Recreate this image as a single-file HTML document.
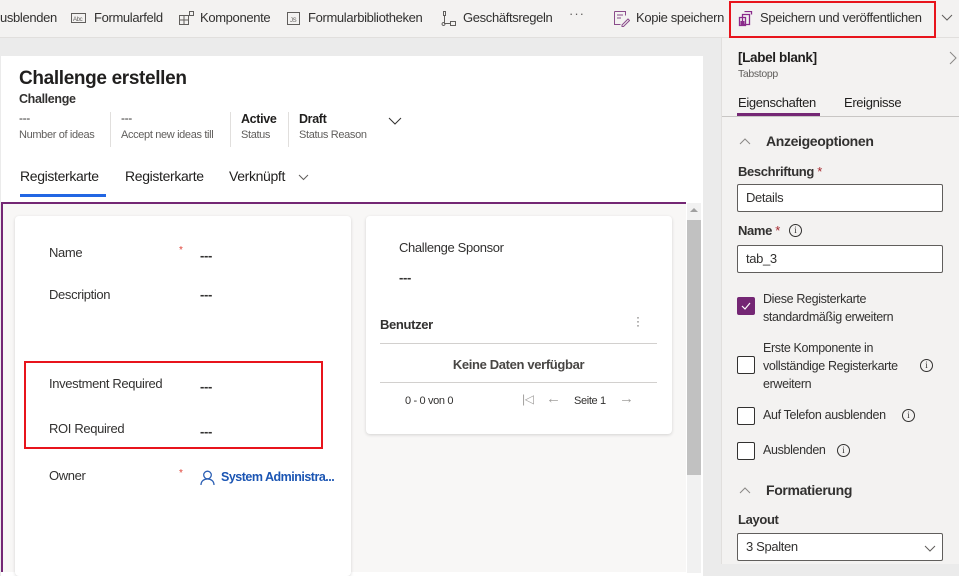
<!DOCTYPE html>
<html><head><meta charset="utf-8"><style>
*{box-sizing:border-box;margin:0;padding:0}
body{width:959px;height:564px;overflow:hidden;background:#ebebeb;font-family:"Segoe UI","Liberation Sans",sans-serif;color:#323130;position:relative;font-size:13px;letter-spacing:-0.35px}
.a{position:absolute;white-space:nowrap}
.tb{position:absolute;left:0;top:0;width:959px;height:38px;background:#f3f2f1;border-bottom:1px solid #e1dfdd}
.tb span{position:absolute;top:10px;font-size:13px;color:#323130}
.ic{position:absolute;top:11px}
.red{position:absolute;border:2px solid #e8141c}
.chk{position:absolute;width:18px;height:18px;border:1px solid #323130;border-radius:2px;background:#fff}
.info{position:absolute;width:13px;height:13px;border:1px solid #323130;border-radius:50%;font-size:9px;text-align:center;line-height:11px;font-family:"Liberation Serif",serif;letter-spacing:0}
.inp{position:absolute;left:737px;width:206px;height:28px;border:1px solid #605e5c;background:#fff;border-radius:2px;padding:0 8px;line-height:26px;font-size:13px}
</style></head><body>
<div class="tb">
<span style="left:0">usblenden</span>
<svg class="ic" style="left:71px" width="16" height="14"><rect x="0.5" y="2.5" width="14" height="9" fill="none" stroke="#605e5c"/><text x="2" y="10" font-size="6" fill="#605e5c">Abc</text></svg>
<span style="left:94px">Formularfeld</span>
<svg class="ic" style="left:179px" width="16" height="16"><path d="M0.5 4.5h9v9h-9zM0.5 9h9M5 4.5v9M10.5 0.5h4v4h-4z" fill="none" stroke="#605e5c"/></svg>
<span style="left:200px">Komponente</span>
<svg class="ic" style="left:287px" width="14" height="15"><rect x="0.5" y="1.5" width="12" height="12" fill="none" stroke="#605e5c"/><text x="3" y="11" font-size="6" fill="#605e5c">JS</text></svg>
<span style="left:308px">Formularbibliotheken</span>
<svg class="ic" style="left:441px" width="16" height="16"><path d="M2.5 0.5v4h2v-4zM3.5 4.5v8h6M9.5 10.5h5v4h-5z M2.5 11.5a1.5 1.5 0 1 0 .01 0" fill="none" stroke="#605e5c"/></svg>
<span style="left:463px">Geschäftsregeln</span>
<span style="left:569px;top:6px;letter-spacing:1px;color:#605e5c">···</span>
<svg class="ic" style="left:614px" width="16" height="16"><path d="M0.5 0.5h11v4M0.5 0.5v13h6M3 4h6M3 7h4M8 14l6-6 1.5 1.5-6 6H8z" fill="none" stroke="#8a4c8b"/></svg>
<span style="left:636px">Kopie speichern</span>
<svg class="ic" style="left:738px" width="16" height="16"><path d="M4.5 3.5h7v10h-7zM1.5 6.5h6v8h-6zM6.5 0.5h7v3" fill="none" stroke="#8a2a8b" stroke-width="1.3"/><rect x="2.5" y="10" width="4" height="4" fill="#8a2a8b"/></svg>
<span style="left:760px">Speichern und veröffentlichen</span>
<svg class="ic" style="left:941px;top:14px" width="12" height="8"><path d="M1 1l5 5 5-5" fill="none" stroke="#605e5c"/></svg>
</div>
<div class="red" style="left:729px;top:1px;width:207px;height:37px"></div>

<div class="a" style="left:1px;top:56px;width:702px;height:520px;background:#fff"></div>
<div class="a" style="left:19px;top:68px;font-size:19px;font-weight:600;color:#201f1e">Challenge erstellen</div>
<div class="a" style="left:19px;top:92px;font-size:12.5px;font-weight:600;color:#323130">Challenge</div>
<div class="a" style="left:19px;top:111px;font-size:12px">---</div>
<div class="a" style="left:19px;top:129px;font-size:11px;color:#605e5c">Number of ideas</div>
<div class="a" style="left:110px;top:112px;width:1px;height:35px;background:#e1dfdd"></div>
<div class="a" style="left:121px;top:111px;font-size:12px">---</div>
<div class="a" style="left:121px;top:129px;font-size:11px;color:#605e5c">Accept new ideas till</div>
<div class="a" style="top:112px;width:1px;height:35px;background:#e1dfdd;left:230px"></div>
<div class="a" style="left:241px;top:112px;font-size:12.5px;font-weight:600;color:#201f1e">Active</div>
<div class="a" style="left:241px;top:129px;font-size:11px;color:#605e5c">Status</div>
<div class="a" style="left:288px;top:112px;width:1px;height:35px;background:#e1dfdd"></div>
<div class="a" style="left:299px;top:112px;font-size:12.5px;font-weight:600;color:#201f1e">Draft</div>
<div class="a" style="left:299px;top:129px;font-size:11px;color:#605e5c">Status Reason</div>
<svg class="a" style="left:388px;top:117px" width="14" height="8"><path d="M1 1l6 6 6-6" fill="none" stroke="#323130"/></svg>
<div class="a" style="left:20px;top:168px;font-size:14px;color:#201f1e">Registerkarte</div>
<div class="a" style="left:20px;top:194px;width:86px;height:3px;background:#2266e3"></div>
<div class="a" style="left:125px;top:168px;font-size:14px;color:#201f1e">Registerkarte</div>
<div class="a" style="left:229px;top:168px;font-size:14px;color:#201f1e">Verknüpft</div>
<svg class="a" style="left:298px;top:174px" width="11" height="7"><path d="M1 1l4.5 4.5L10 1" fill="none" stroke="#605e5c"/></svg>

<div class="a" style="left:1px;top:202px;width:685px;height:370px;background:#f8f7f6;border-top:2px solid #742774;border-left:2px solid #742774"></div>
<div class="a" style="left:687px;top:203px;width:14px;height:370px;background:#f1f1f1"></div>
<div class="a" style="left:690px;top:208px;width:0;height:0;border:4px solid transparent;border-bottom:4px solid #a0a0a0;border-top:0"></div>
<div class="a" style="left:687px;top:220px;width:14px;height:255px;background:#c1c1c1"></div>

<div class="a" style="left:15px;top:216px;width:336px;height:360px;background:#fff;border-radius:4px;box-shadow:0 1px 3px rgba(0,0,0,.15)"></div>
<div class="a" style="left:49px;top:245px">Name</div>
<div class="a" style="left:179px;top:245px;color:#e0453a;font-size:10px">*</div>
<div class="a" style="left:200px;top:248px;font-weight:600">---</div>
<div class="a" style="left:49px;top:287px">Description</div>
<div class="a" style="left:200px;top:287px;font-weight:600">---</div>
<div class="a" style="left:49px;top:376px">Investment Required</div>
<div class="a" style="left:200px;top:379px;font-weight:600">---</div>
<div class="a" style="left:49px;top:421px">ROI Required</div>
<div class="a" style="left:200px;top:424px;font-weight:600">---</div>
<div class="red" style="left:24px;top:361px;width:299px;height:88px"></div>
<div class="a" style="left:49px;top:468px">Owner</div>
<div class="a" style="left:179px;top:468px;color:#e0453a;font-size:10px">*</div>
<svg class="a" style="left:200px;top:470px" width="15" height="15"><circle cx="7.5" cy="5" r="3.8" fill="none" stroke="#2b5fb4" stroke-width="1.3"/><path d="M1 15c0-4 3-6 6.5-6s6.5 2 6.5 6" fill="none" stroke="#2b5fb4" stroke-width="1.3"/></svg>
<div class="a" style="left:221px;top:470px;color:#1b55b3;font-weight:600;font-size:12.5px;letter-spacing:-0.5px">System Administra...</div>

<div class="a" style="left:366px;top:216px;width:306px;height:218px;background:#fff;border-radius:4px;box-shadow:0 1px 3px rgba(0,0,0,.15)"></div>
<div class="a" style="left:399px;top:240px">Challenge Sponsor</div>
<div class="a" style="left:399px;top:270px;font-weight:600">---</div>
<div class="a" style="left:380px;top:317px;font-weight:600">Benutzer</div>
<div class="a" style="left:636px;top:315px;font-size:12px;line-height:4px;color:#605e5c">·<br>·<br>·</div>
<div class="a" style="left:380px;top:343px;width:277px;height:1px;background:#d2d0ce"></div>
<div class="a" style="left:380px;top:357px;width:277px;text-align:center;font-weight:600;color:#484644">Keine Daten verfügbar</div>
<div class="a" style="left:380px;top:382px;width:277px;height:1px;background:#d2d0ce"></div>
<div class="a" style="left:405px;top:395px;font-size:11px">0 - 0 von 0</div>
<div class="a" style="left:522px;top:392px;color:#a19f9d;font-size:12px">|◁</div>
<div class="a" style="left:546px;top:390px;color:#a19f9d;font-size:15px">←</div>
<div class="a" style="left:574px;top:395px;font-size:11px">Seite 1</div>
<div class="a" style="left:619px;top:390px;color:#a19f9d;font-size:15px">→</div>

<div class="a" style="left:721px;top:38px;width:238px;height:526px;background:#f3f2f1;border-left:1px solid #e1dfdd"></div>
<div class="a" style="left:738px;top:50px;font-size:13.5px;font-weight:600;color:#201f1e">[Label blank]</div>
<div class="a" style="left:738px;top:68px;font-size:10.5px;color:#605e5c">Tabstopp</div>
<svg class="a" style="left:949px;top:51px" width="8" height="14"><path d="M1 1l6 6-6 6" fill="none" stroke="#8a8886"/></svg>
<div class="a" style="left:738px;top:95px;font-size:13px;color:#201f1e">Eigenschaften</div>
<div class="a" style="left:737px;top:113px;width:83px;height:3px;background:#742774"></div>
<div class="a" style="left:844px;top:95px;font-size:13px;color:#201f1e">Ereignisse</div>
<div class="a" style="left:722px;top:116px;width:237px;height:1px;background:#c8c6c4"></div>
<svg class="a" style="left:739px;top:138px" width="12" height="7"><path d="M1 6l5-5 5 5" fill="none" stroke="#8a8886"/></svg>
<div class="a" style="left:766px;top:133px;font-size:14px;font-weight:600;color:#323130">Anzeigeoptionen</div>
<div class="a" style="left:738px;top:164px;font-weight:600">Beschriftung <span style="color:#a4262c;font-weight:400">*</span></div>
<div class="inp" style="top:184px">Details</div>
<div class="a" style="left:738px;top:223px;font-weight:600">Name <span style="color:#a4262c;font-weight:400">*</span></div>
<div class="info" style="left:789px;top:224px">i</div>
<div class="inp" style="top:245px">tab_3</div>
<div class="chk" style="left:737px;top:297px;background:#742774;border-color:#742774"></div>
<svg class="a" style="left:741px;top:302px" width="10" height="8"><path d="M1 4l3 3 5-6" fill="none" stroke="#fff" stroke-width="1.2"/></svg>
<div class="a" style="left:763px;top:290px;line-height:18px;font-size:12.5px">Diese Registerkarte<br>standardmäßig erweitern</div>
<div class="chk" style="left:737px;top:356px"></div>
<div class="a" style="left:763px;top:339px;line-height:18px;font-size:12.5px">Erste Komponente in<br>vollständige Registerkarte<br>erweitern</div>
<div class="info" style="left:920px;top:359px">i</div>
<div class="chk" style="left:737px;top:407px"></div>
<div class="a" style="left:763px;top:408px;font-size:12.5px">Auf Telefon ausblenden</div>
<div class="info" style="left:902px;top:409px">i</div>
<div class="chk" style="left:737px;top:442px"></div>
<div class="a" style="left:763px;top:443px;font-size:12.5px">Ausblenden</div>
<div class="info" style="left:837px;top:444px">i</div>
<svg class="a" style="left:739px;top:487px" width="12" height="7"><path d="M1 6l5-5 5 5" fill="none" stroke="#8a8886"/></svg>
<div class="a" style="left:766px;top:482px;font-size:14px;font-weight:600;color:#323130">Formatierung</div>
<div class="a" style="left:738px;top:512px;font-weight:600">Layout</div>
<div class="inp" style="top:533px">3 Spalten</div>
<svg class="a" style="left:924px;top:545px" width="12" height="7"><path d="M1 1l5 5 5-5" fill="none" stroke="#605e5c"/></svg>
</body></html>
